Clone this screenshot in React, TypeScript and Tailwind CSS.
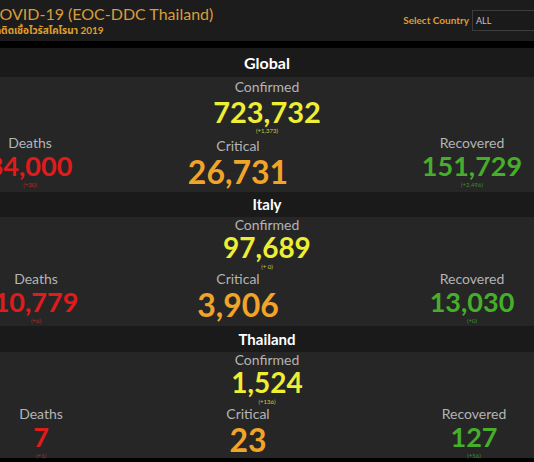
import type { ReactNode } from "react"

type Stat = {
  label: string
  value: string
  delta?: string
  color: string
  deltaColor: string
}

const font = { fontFamily: "Lato, 'Noto Sans', 'Noto Sans Thai', 'DejaVu Sans', sans-serif" }

function StatBlock({
  stat,
  labelClass,
  valueClass,
  deltaClass = "",
  className = "",
}: {
  stat: Stat
  labelClass: string
  valueClass: string
  deltaClass?: string
  className?: string
}) {
  return (
    <div className={`flex flex-col items-center whitespace-nowrap ${className}`}>
      <div className={`text-[14px] text-[#b4b4b4] ${labelClass}`}>{stat.label}</div>
      <div className={`font-bold ${stat.color} ${valueClass}`}>{stat.value}</div>
      {stat.delta ? (
        <div className={`text-[6px] leading-[8px] ${stat.deltaColor} ${deltaClass}`}>{stat.delta}</div>
      ) : null}
    </div>
  )
}

function SectionHeader({ title, className }: { title: string; className: string }) {
  return (
    <div className={`flex items-center justify-center bg-[#1a1a1a] font-bold text-white ${className}`}>
      {title}
    </div>
  )
}

type Section = {
  title: string
  headerClass: string
  bodyClass: string
  confirmed: Stat
  deaths: Stat
  critical: Stat
  recovered: Stat
  cols: [string, string, string]
  big?: boolean
}

const yellow = "text-[#eeee34]"
const orange = "text-[#f0a52a]"
const red = "text-[#e01b1b]"
const green = "text-[#46ae2a]"

const sections: Section[] = [
  {
    title: "Global",
    headerClass: "h-[29px] text-[16px]",
    bodyClass: "h-[115px] pt-[2px]",
    big: true,
    confirmed: { label: "Confirmed", value: "723,732", delta: "(+1,373)", color: yellow, deltaColor: "text-[#c9c94a]" },
    deaths: { label: "Deaths", value: "34,000", delta: "(+30)", color: red, deltaColor: "text-[#b52a2a]" },
    critical: { label: "Critical", value: "26,731", color: orange, deltaColor: "" },
    recovered: { label: "Recovered", value: "151,729", delta: "(+2,496)", color: green, deltaColor: "text-[#3d8f27]" },
    cols: ["ml-[-20px]", "ml-[108px]", "ml-[134px]"],
  },
  {
    title: "Italy",
    headerClass: "h-[25px] text-[15px]",
    bodyClass: "h-[109px]",
    confirmed: { label: "Confirmed", value: "97,689", delta: "(+ 0)", color: yellow, deltaColor: "text-[#c9c94a]" },
    deaths: { label: "Deaths", value: "10,779", delta: "(+6)", color: red, deltaColor: "text-[#b52a2a]" },
    critical: { label: "Critical", value: "3,906", color: orange, deltaColor: "" },
    recovered: { label: "Recovered", value: "13,030", delta: "(+0)", color: green, deltaColor: "text-[#3d8f27]" },
    cols: ["ml-[-14px]", "ml-[102px]", "ml-[134px]"],
  },
  {
    title: "Thailand",
    headerClass: "h-[26px] text-[15px]",
    bodyClass: "h-[106px]",
    confirmed: { label: "Confirmed", value: "1,524", delta: "(+136)", color: yellow, deltaColor: "text-[#c9c94a]" },
    deaths: { label: "Deaths", value: "7", delta: "(+1)", color: red, deltaColor: "text-[#b52a2a]" },
    critical: { label: "Critical", value: "23", color: orange, deltaColor: "" },
    recovered: { label: "Recovered", value: "127", delta: "(+56)", color: green, deltaColor: "text-[#3d8f27]" },
    cols: ["ml-[-9px]", "ml-[107px]", "ml-[126px]"],
  },
]

function SectionBody({ s }: { s: Section }): ReactNode {
  const label = "leading-[16px]"
  const value = s.big ? "text-[29px] leading-[30px] mt-[2px]" : "text-[28px] leading-[28px]"
  const side = "text-[27px] leading-[30px]"
  const crit = "text-[32px] leading-[36px]"
  return (
    <div className={`flex flex-col bg-[#262626] ${s.bodyClass}`}>
      <StatBlock stat={s.confirmed} labelClass={label} valueClass={value} deltaClass={s.big ? "" : "mt-[2px]"} />
      <div className="flex">
        <StatBlock className={`w-[100px] shrink-0 ${s.cols[0]}`} stat={s.deaths} labelClass={label} valueClass={side} />
        <StatBlock
          className={`w-[100px] shrink-0 ${s.cols[1]} ${s.big ? "mt-[3px]" : ""}`}
          stat={s.critical}
          labelClass={label}
          valueClass={crit}
        />
        <StatBlock className={`w-[100px] shrink-0 ${s.cols[2]}`} stat={s.recovered} labelClass={label} valueClass={side} />
      </div>
    </div>
  )
}

export default function App() {
  return (
    <div className="h-[462px] w-[534px] overflow-hidden bg-black" style={font}>
      <header className="flex h-[41px] items-center justify-between overflow-hidden bg-[#1c1c1c]">
        <div className="flex flex-col whitespace-nowrap">
          <div className="ml-[-11px] text-[16px] leading-[20px] text-[#d99c3b]">COVID-19 (EOC-DDC Thailand)</div>
          <div className="ml-[-14px] text-[10px] font-bold leading-[13px] text-[#e0a02c]">
            โรคติดเชื้อไวรัสโคโรนา 2019
          </div>
        </div>
        <div className="mr-[-20px] flex items-center gap-[3px] whitespace-nowrap">
          <span className="text-[10px] font-bold text-[#dc9d35]">Select Country</span>
          <div className="flex h-[21px] w-[82px] items-center border border-[#3c3c3c] bg-[#1a1a1a] px-[3px] text-[9px] text-[#c4c4c4]">
            ALL
          </div>
        </div>
      </header>
      <div className="h-[7px]" />
      {sections.map((s) => (
        <section key={s.title}>
          <SectionHeader title={s.title} className={s.headerClass} />
          <SectionBody s={s} />
        </section>
      ))}
    </div>
  )
}
